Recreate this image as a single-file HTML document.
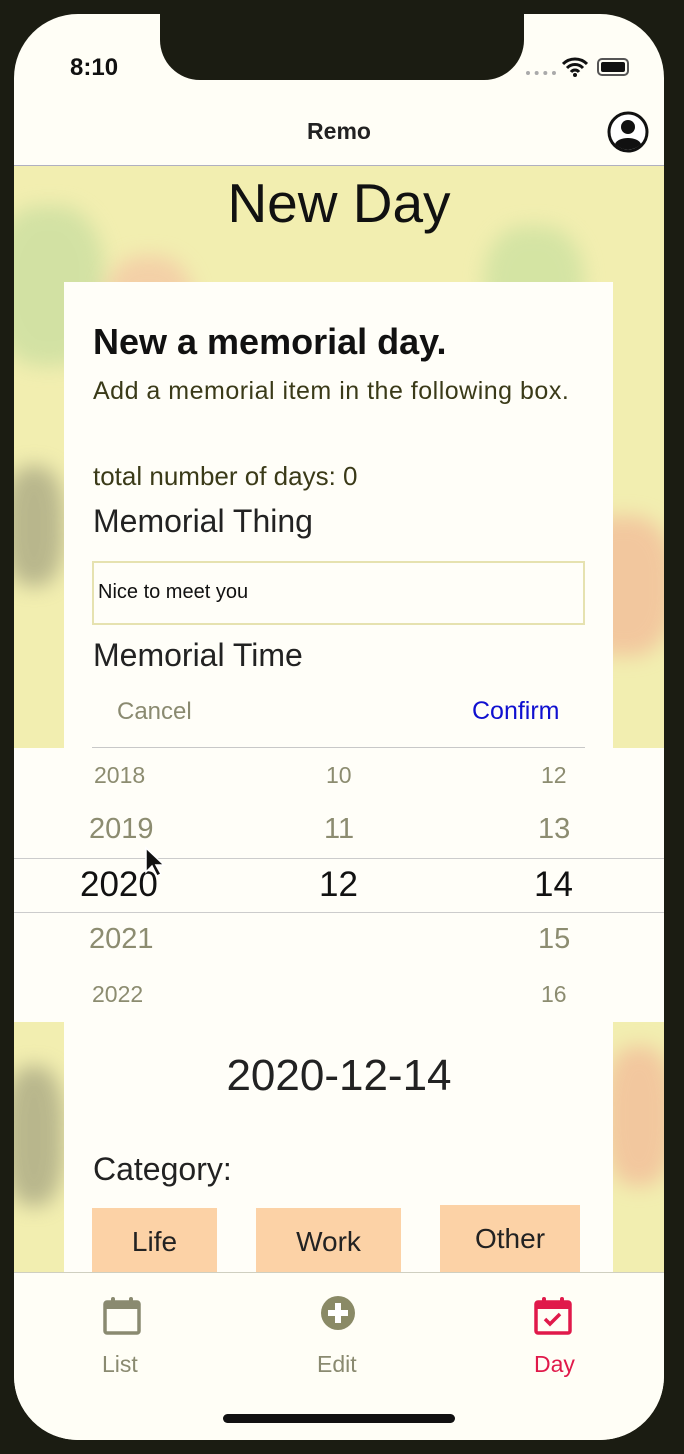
<!DOCTYPE html>
<html><head><meta charset="utf-8"><style>
*{margin:0;padding:0;box-sizing:border-box}
body{width:684px;height:1454px;background:#1b1c12;position:relative;overflow:hidden;font-family:"Liberation Sans",sans-serif}
.screen{position:absolute;left:14px;top:14px;width:650px;height:1426px;background:#fffef6;border-radius:64px;overflow:hidden}
.notch{position:absolute;left:146px;top:0;width:364px;height:66px;background:#1b1c12;border-radius:0 0 40px 40px}
.bg{position:absolute;left:0;top:152px;width:650px;height:1106px;background:#f2eeb0;overflow:hidden}
.blob{position:absolute;border-radius:40%;filter:blur(10px);opacity:.55}
.abs{position:absolute}
.card{position:absolute;left:50px;top:268px;width:549px;height:1000px;background:#fffef8}
.picker{position:absolute;left:0;top:734px;width:650px;height:274px;background:#fffef8}
.pk{position:absolute;color:#8c8c70;font-size:24px}
.cat{position:absolute;background:#fcd2a6;font-size:28px;color:#222;text-align:center}
.tab{position:absolute;left:0;top:1258px;width:650px;height:170px;background:#fffef6;border-top:1px solid #cfcfc0}
</style></head><body>
<div class="screen">
 <div class="bg">
  <div class="blob" style="left:-20px;top:40px;width:110px;height:160px;background:#b9d89a"></div>
  <div class="blob" style="left:90px;top:90px;width:90px;height:120px;background:#f5b8a0"></div>
  <div class="blob" style="left:470px;top:60px;width:100px;height:130px;background:#bcdc9a"></div>
  <div class="blob" style="left:560px;top:350px;width:100px;height:140px;background:#f3a890"></div>
  <div class="blob" style="left:-10px;top:300px;width:60px;height:120px;background:#8a8a70"></div>
  <div class="blob" style="left:590px;top:880px;width:70px;height:140px;background:#f3a890"></div>
  <div class="blob" style="left:-10px;top:900px;width:60px;height:140px;background:#8a8a70"></div>
 </div>
 <div class="notch"></div>
 <div class="abs" style="left:56px;top:40px;font-size:24px;font-weight:bold;color:#111">8:10</div>
 <div class="abs" style="left:512px;top:57px;width:30px;height:4px;border-top:4px dotted #aaa"></div>
 <svg class="abs" style="left:548px;top:42px" width="26" height="22" viewBox="0 0 26 22"><path d="M1 8a17 17 0 0 1 24 0M5 12a11 11 0 0 1 16 0M9 16a5 5 0 0 1 8 0" stroke="#111" stroke-width="3" fill="none"/><circle cx="13" cy="19" r="2" fill="#111"/></svg>
 <div class="abs" style="left:583px;top:44px;width:32px;height:18px;border:2px solid #555;border-radius:5px;padding:2px"><div style="width:100%;height:100%;background:#111;border-radius:2px"></div></div>
 <div class="abs" style="left:0;top:104px;width:650px;text-align:center;font-size:23px;font-weight:bold;color:#222">Remo</div>
 <svg class="abs" style="left:593px;top:97px" width="42" height="42" viewBox="0 0 42 42"><circle cx="21" cy="21" r="19" fill="#fff" stroke="#111" stroke-width="3"/><circle cx="21" cy="16" r="7" fill="#111"/><path d="M8 33c3-8 23-8 26 0a18 18 0 0 1-26 0z" fill="#111"/></svg>
 <div class="abs" style="left:0;top:151px;width:650px;height:1px;background:#b0b0c0"></div>
 <div class="abs" style="left:0;top:157px;width:650px;text-align:center;font-size:55px;color:#111">New Day</div>
 <div class="card"></div>
 <div class="abs" style="left:79px;top:307px;font-size:36px;font-weight:bold;color:#111">New a memorial day.</div>
 <div class="abs" style="left:79px;top:363px;font-size:25px;letter-spacing:.5px;color:#3a3a18">Add a memorial item in the following box.</div>
 <div class="abs" style="left:79px;top:447px;font-size:26px;color:#3a3a18">total number of days: 0</div>
 <div class="abs" style="left:79px;top:489px;font-size:32px;color:#222">Memorial Thing</div>
 <div class="abs" style="left:78px;top:547px;width:493px;height:64px;border:2px solid #e6e2b0;font-size:20px;color:#111;padding:18px 0 0 4px">Nice to meet you</div>
 <div class="abs" style="left:79px;top:623px;font-size:32px;color:#222">Memorial Time</div>
 <div class="abs" style="left:103px;top:684px;font-size:24px;color:#8a8a70">Cancel</div>
 <div class="abs" style="left:458px;top:683px;font-size:25px;color:#1010d0">Confirm</div>
 <div class="abs" style="left:78px;top:733px;width:493px;height:1px;background:#c8c8c8"></div>
 <div class="picker">
  <div class="abs" style="left:0;top:110px;width:650px;height:1px;background:#ccc"></div>
  <div class="abs" style="left:0;top:164px;width:650px;height:1px;background:#ccc"></div>
  <div class="pk" style="left:80px;top:14px;font-size:23px">2018</div>
  <div class="pk" style="left:312px;top:14px;font-size:23px">10</div>
  <div class="pk" style="left:527px;top:14px;font-size:23px">12</div>
  <div class="pk" style="left:75px;top:65px;font-size:29px">2019</div>
  <div class="pk" style="left:310px;top:65px;font-size:29px">11</div>
  <div class="pk" style="left:524px;top:65px;font-size:29px">13</div>
  <div class="pk" style="left:66px;top:117px;font-size:35px;color:#111">2020</div>
  <div class="pk" style="left:305px;top:117px;font-size:35px;color:#111">12</div>
  <div class="pk" style="left:520px;top:117px;font-size:35px;color:#111">14</div>
  <div class="pk" style="left:75px;top:175px;font-size:29px">2021</div>
  <div class="pk" style="left:524px;top:175px;font-size:29px">15</div>
  <div class="pk" style="left:78px;top:233px;font-size:23px">2022</div>
  <div class="pk" style="left:527px;top:233px;font-size:23px">16</div>
  <svg class="abs" style="left:130px;top:98px" width="24" height="34" viewBox="0 0 24 34"><path d="M2 2v24l6-6 5 10 4-2-5-9h8z" fill="#111" stroke="#fff" stroke-width="1.5"/></svg>
 </div>
 <div class="abs" style="left:0;top:1037px;width:650px;text-align:center;font-size:44px;color:#222">2020-12-14</div>
 <div class="abs" style="left:79px;top:1137px;font-size:32px;color:#222">Category:</div>
 <div class="cat" style="left:78px;top:1194px;width:125px;height:70px;padding-top:18px">Life</div>
 <div class="cat" style="left:242px;top:1194px;width:145px;height:70px;padding-top:18px">Work</div>
 <div class="cat" style="left:426px;top:1191px;width:140px;height:73px;padding-top:18px">Other</div>
 <div class="tab">
  <svg class="abs" style="left:88px;top:22px" width="40" height="40" viewBox="0 0 40 40"><rect x="3" y="7" width="34" height="31" rx="2" fill="none" stroke="#8a8a70" stroke-width="3.5"/><rect x="3" y="7" width="34" height="7" fill="#8a8a70"/><rect x="9" y="2" width="4" height="10" rx="2" fill="#8a8a70"/><rect x="27" y="2" width="4" height="10" rx="2" fill="#8a8a70"/></svg>
  <div class="abs" style="left:88px;top:78px;font-size:23px;color:#8a8a70">List</div>
  <svg class="abs" style="left:306px;top:22px" width="36" height="36" viewBox="0 0 36 36"><circle cx="18" cy="18" r="17" fill="#8a8a66"/><path d="M18 8v20M8 18h20" stroke="#fff" stroke-width="6"/></svg>
  <div class="abs" style="left:303px;top:78px;font-size:23px;color:#8a8a70">Edit</div>
  <svg class="abs" style="left:519px;top:22px" width="40" height="40" viewBox="0 0 40 40"><rect x="3" y="7" width="34" height="31" rx="2" fill="none" stroke="#e0194a" stroke-width="3.5"/><rect x="3" y="7" width="34" height="7" fill="#e0194a"/><rect x="9" y="2" width="4" height="10" rx="2" fill="#e0194a"/><rect x="27" y="2" width="4" height="10" rx="2" fill="#e0194a"/><path d="M12 24l5 5 10-10" stroke="#e0194a" stroke-width="3.5" fill="none"/></svg>
  <div class="abs" style="left:520px;top:78px;font-size:23px;color:#e0194a">Day</div>
  <div class="abs" style="left:209px;top:141px;width:232px;height:9px;border-radius:5px;background:#111"></div>
 </div>
</div>
</body></html>
